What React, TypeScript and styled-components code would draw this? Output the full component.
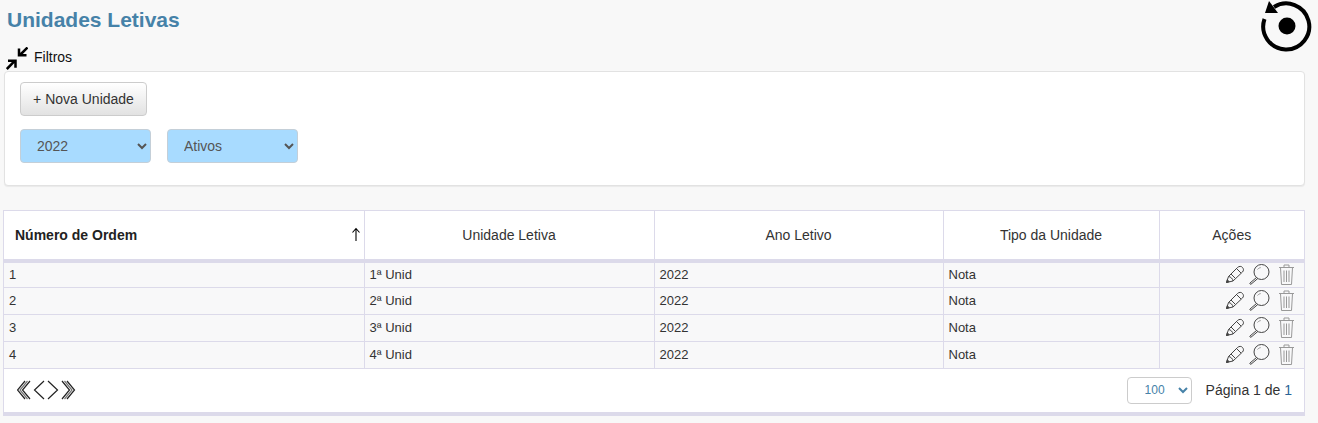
import React from 'react';
import styled, { createGlobalStyle } from 'styled-components';

const GlobalStyle = createGlobalStyle`
  html, body {
    margin: 0;
    padding: 0;
    background-color: #f8f8f8;
    font-family: "Liberation Sans", Arial, sans-serif;
    color: #333;
  }
`;

const Page = styled.div`
  width: 1318px;
  height: 423px;
  overflow: hidden;
  padding: 0 13px 0 4px;
  box-sizing: border-box;
`;

const TitleRow = styled.div`
  height: 47px;
  display: flex;
  justify-content: space-between;
  align-items: flex-start;
`;

const Title = styled.h1`
  margin: 8px 0 0 3px;
  font-size: 21px;
  line-height: 23px;
  font-weight: bold;
  color: #4682a8;
`;

const ReloadIcon = styled.svg`
  width: 52px;
  height: 52px;
  margin-right: -8px;
  flex: none;
`;

const FilterToggle = styled.div`
  height: 24px;
  display: flex;
  align-items: flex-start;
  gap: 6px;
  margin-left: 2px;
  font-size: 14px;
  color: #111;
  span {
    line-height: 20px;
  }
`;

const FilterPanel = styled.div`
  width: 1301px;
  height: 115px;
  box-sizing: border-box;
  background-color: #fff;
  border: 1px solid #e2e2e2;
  border-radius: 4px;
  box-shadow: 0 1px 1px rgba(0, 0, 0, 0.06);
  padding: 10px 15px;
`;

const NewButton = styled.button`
  display: block;
  width: 127px;
  height: 34px;
  padding: 0;
  font-family: inherit;
  font-size: 14px;
  color: #333;
  background: linear-gradient(#fff, #e2e2e2);
  border: 1px solid #ccc;
  border-radius: 4px;
`;

const SelectRow = styled.div`
  display: flex;
  gap: 16px;
  margin-top: 13px;
`;

const FilterSelect = styled.select`
  width: 131px;
  height: 34px;
  box-sizing: border-box;
  padding: 0 12px;
  font-family: inherit;
  font-size: 14px;
  color: #555;
  background-color: #a8dbff;
  border: 1px solid #c4cfd8;
  border-radius: 4px;
`;

const TableCard = styled.div`
  width: 1302px;
  margin: 24px 0 0 -1px;
  box-sizing: border-box;
  background-color: #fff;
  border: 1px solid #dcdaea;
  border-bottom: 4px solid #dcdaea;
`;

const Table = styled.table`
  width: 100%;
  border-collapse: collapse;
  table-layout: fixed;
`;

const HeadCell = styled.th<{ $first?: boolean }>`
  position: relative;
  height: 50px;
  padding: 0 0 0 ${(p) => (p.$first ? '11px' : '0')};
  box-sizing: border-box;
  font-size: 14px;
  font-weight: ${(p) => (p.$first ? 'bold' : 'normal')};
  text-align: ${(p) => (p.$first ? 'left' : 'center')};
  color: ${(p) => (p.$first ? '#222' : '#333')};
  border-left: 1px solid #dcdaea;
  border-bottom: 4px solid #dcdaea;
  &:first-child {
    border-left: 0;
  }
`;

const SortArrow = styled.svg`
  position: absolute;
  right: 2px;
  top: 16px;
  width: 12px;
  height: 15px;
`;

const Row = styled.tr`
  height: 26.75px;
`;

const Cell = styled.td`
  padding: 0 0 1px 5px;
  box-sizing: border-box;
  font-size: 13px;
  color: #333;
  background-color: #f8f8f9;
  border-left: 1px solid #dcdaea;
  border-bottom: 1px solid #dcdaea;
  &:first-child {
    border-left: 0;
  }
`;

const ActionCell = styled(Cell)`
  padding: 0 6px 2px 0;
`;

const Actions = styled.div`
  display: flex;
  justify-content: flex-end;
  align-items: center;
  gap: 2px;
`;

const ActionIcon = styled.svg`
  width: 22px;
  height: 22px;
  flex: none;
`;

const TrashSvg = styled(ActionIcon)`
  margin-left: 4px;
`;

const Footer = styled.div`
  height: 43px;
  display: flex;
  justify-content: space-between;
  align-items: center;
  padding: 0 12px 0 13px;
`;

const Pager = styled.svg`
  width: 60px;
  height: 20px;
`;

const PageInfo = styled.div`
  display: flex;
  align-items: center;
  gap: 14px;
  font-size: 14px;
  color: #333;
`;

const PageSize = styled.select`
  width: 65px;
  height: 27px;
  box-sizing: border-box;
  padding: 0 0 0 13px;
  font-family: inherit;
  font-size: 12px;
  color: #4682a8;
  background-color: #fff;
  border: 1px solid #ccc;
  border-radius: 4px;
`;

const PageNumber = styled.span`
  color: #2a6496;
`;

const rows = [
  { order: 1, unit: '1ª Unid' },
  { order: 2, unit: '2ª Unid' },
  { order: 3, unit: '3ª Unid' },
  { order: 4, unit: '4ª Unid' },
];

function EditIcon() {
  return (
    <ActionIcon viewBox="0 0 22 22" fill="none" stroke="#444" strokeWidth="1">
      <path d="M2.500 19.500 4.500 13.500 13.500 4.500C15 3 17.500 3 18.500 4.500 19.800 6 19.800 7.500 18.500 9L9 18z" />
      <path d="M4.500 13.500C6.500 13.500 9 16 9 18M12.500 5.500l4.500 4.500M7 11l4 4" />
      <path d="M2.500 19.500 3.300 16.800 5.200 18.700z" fill="#444" />
    </ActionIcon>
  );
}

function SearchIcon() {
  return (
    <ActionIcon viewBox="0 0 22 22" fill="none" stroke="#444" strokeWidth="1">
      <circle cx="13.500" cy="9" r="7.500" />
      <path d="M8.500 14.500 2 20c-.5.5 0 1.500 1 1.200l6.800-5.700" />
      <path d="M9.500 6.500c1-1.200 2-1.800 3.200-1.900" stroke="#999" />
    </ActionIcon>
  );
}

function TrashIcon() {
  return (
    <TrashSvg viewBox="0 0 22 22" fill="none" stroke="#999" strokeWidth="1">
      <path d="M3 4.500h15M8 4.500V2h5v2.500M4.500 4.500l1 17h10l1-17" />
      <path d="M8 7.500v11.500M10.500 7.500v11.500M13 7.500v11.500" />
    </TrashSvg>
  );
}

function App() {
  return (
    <Page>
      <GlobalStyle />
      <TitleRow>
        <Title>Unidades Letivas</Title>
        <ReloadIcon viewBox="0 0 52 52">
          <circle cx="26" cy="26" r="8.500" fill="#000" />
          <path d="M3.500 19A23 23 0 1 0 13 7" fill="none" stroke="#000" strokeWidth="4" />
          <path d="M8 1 4 13H17z" fill="#000" />
        </ReloadIcon>
      </TitleRow>
      <FilterToggle>
        <svg width="22" height="23" viewBox="0 0 22 23" fill="none" stroke="#000" strokeWidth="2.500">
          <path d="M.8 22 8.500 14.200M2 13.800h7.500v7" />
          <path d="M21.500.5 13.500 8.500M13 1.500v6.800h7.500" />
        </svg>
        <span>Filtros</span>
      </FilterToggle>
      <FilterPanel>
        <NewButton>+ Nova Unidade</NewButton>
        <SelectRow>
          <FilterSelect defaultValue="2022">
            <option>2022</option>
          </FilterSelect>
          <FilterSelect defaultValue="Ativos">
            <option>Ativos</option>
          </FilterSelect>
        </SelectRow>
      </FilterPanel>
      <TableCard>
        <Table>
          <colgroup>
            <col width="360" />
            <col width="290" />
            <col width="289" />
            <col width="216" />
            <col width="145" />
          </colgroup>
          <thead>
            <tr>
              <HeadCell $first>
                Número de Ordem
                <SortArrow viewBox="0 0 12 15" fill="none" stroke="#000" strokeWidth="1.100">
                  <path d="M6 14V2M2.500 5.500 6 1.500l3.500 4" />
                </SortArrow>
              </HeadCell>
              <HeadCell>Unidade Letiva</HeadCell>
              <HeadCell>Ano Letivo</HeadCell>
              <HeadCell>Tipo da Unidade</HeadCell>
              <HeadCell>Ações</HeadCell>
            </tr>
          </thead>
          <tbody>
            {rows.map((row) => (
              <Row key={row.order}>
                <Cell>{row.order}</Cell>
                <Cell>{row.unit}</Cell>
                <Cell>2022</Cell>
                <Cell>Nota</Cell>
                <ActionCell>
                  <Actions>
                    <EditIcon />
                    <SearchIcon />
                    <TrashIcon />
                  </Actions>
                </ActionCell>
              </Row>
            ))}
          </tbody>
        </Table>
        <Footer>
          <Pager viewBox="0 0 60 20" fill="none" stroke="#222" strokeWidth="1.200">
            <path d="M8 1 .5 10 8 19M13 1 5.500 10 13 19" />
            <path d="M10.500 1 3 10l7.500 9" stroke="#777" />
            <path d="M27 1 17.500 10 27 19" />
            <path d="M31 1 40.500 10 31 19" />
            <path d="M45 1 52.500 10 45 19M50 1 57.500 10 50 19" />
            <path d="M47.500 1 55 10l-7.500 9" stroke="#777" />
          </Pager>
          <PageInfo>
            <PageSize defaultValue="100">
              <option>100</option>
            </PageSize>
            <span>
              Página 1 de <PageNumber>1</PageNumber>
            </span>
          </PageInfo>
        </Footer>
      </TableCard>
    </Page>
  );
}

export default App;
